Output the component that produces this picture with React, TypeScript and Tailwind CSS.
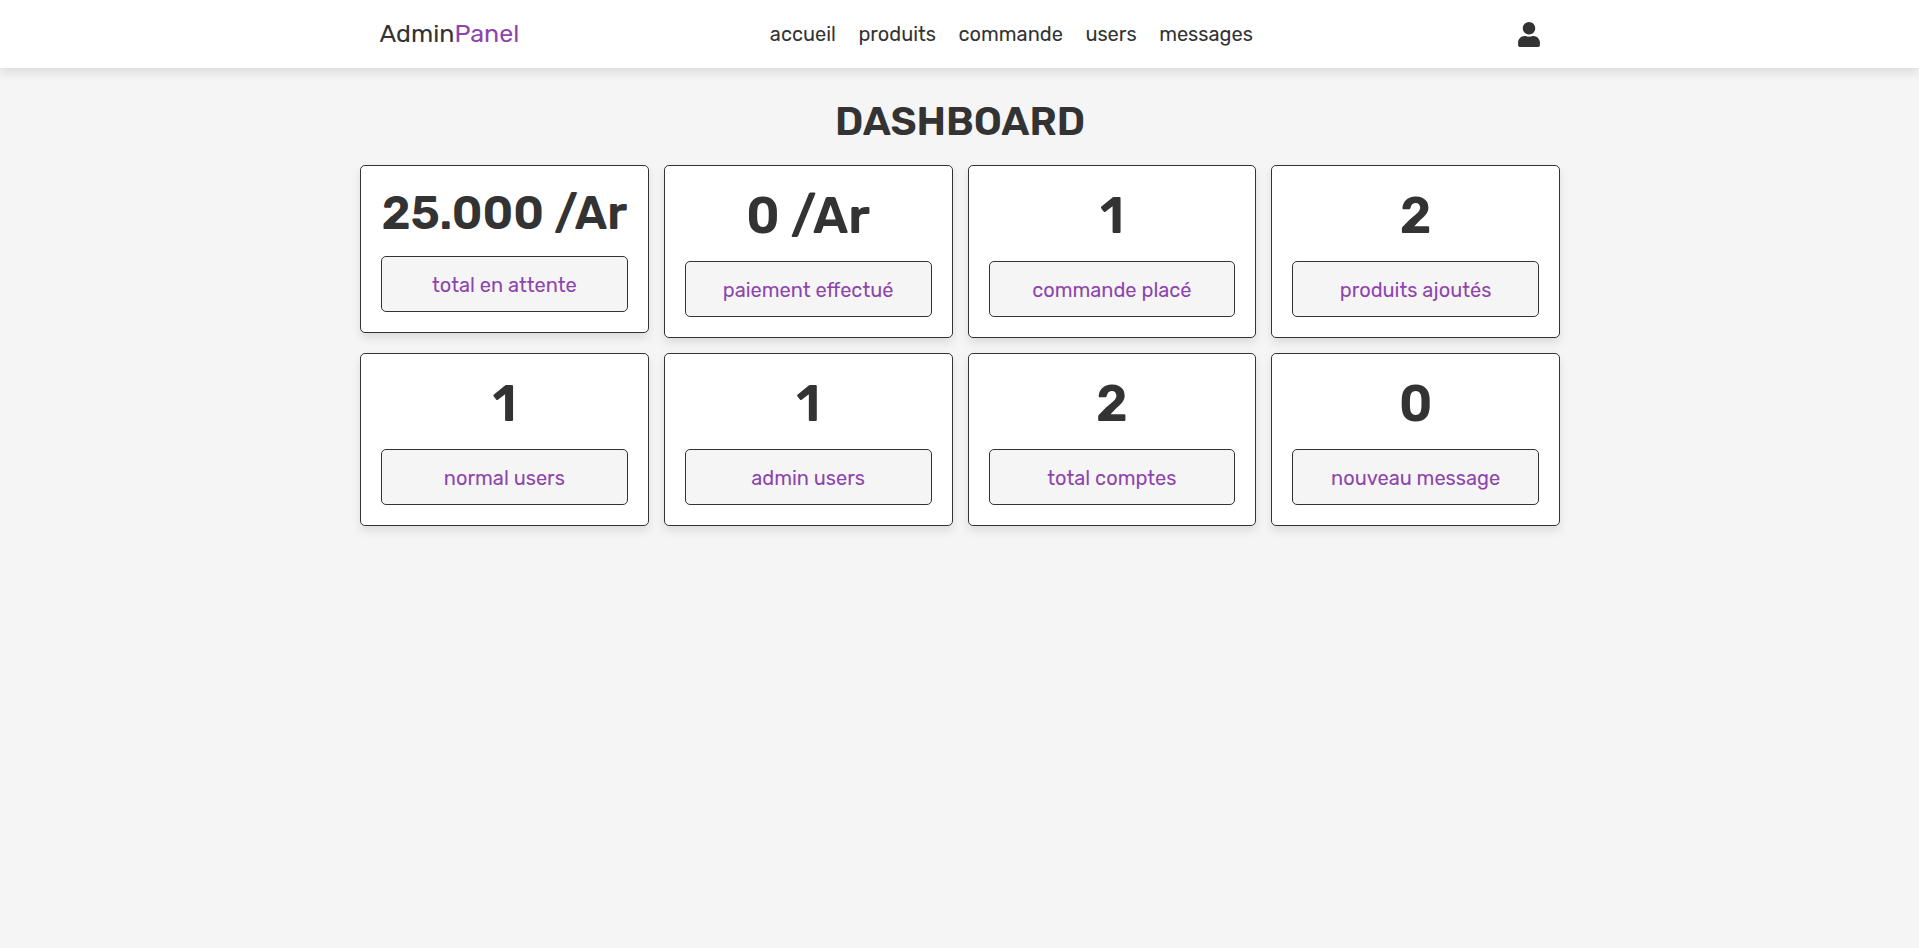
import { FaUser } from 'react-icons/fa';

const font = "font-['Rubik','Roboto','Liberation_Sans',sans-serif]";

const stats = [
  { value: '25.000 /Ar', label: 'total en attente', small: true },
  { value: '0 /Ar', label: 'paiement effectué' },
  { value: '1', label: 'commande placé' },
  { value: '2', label: 'produits ajoutés' },
  { value: '1', label: 'normal users' },
  { value: '1', label: 'admin users' },
  { value: '2', label: 'total comptes' },
  { value: '0', label: 'nouveau message' },
];

const links = ['accueil', 'produits', 'commande', 'users', 'messages'];

function StatCard({ value, label, small }: { value: string; label: string; small?: boolean }) {
  return (
    <div className="flex flex-col rounded-[5px] border border-[#333] bg-white px-[20px] pt-[17px] pb-[20px] text-center shadow-[0_5px_10px_rgba(0,0,0,0.1)]">
      <h3 className={small ? 'h-[61px] text-[46px] leading-[61px] font-semibold whitespace-nowrap text-[#333]' : 'h-[66px] text-[50px] leading-[66px] font-semibold text-[#333]'}>
        {value}
      </h3>
      <p className="mt-[12px] flex h-[56px] items-center justify-center rounded-[5px] border border-[#333] bg-[#f5f5f5] pt-[1px] text-[20px] font-normal text-[#8e44ad]">
        {label}
      </p>
    </div>
  );
}

export default function App() {
  return (
    <div className={`${font} min-h-[948px] bg-[#f5f5f5]`}>
      <header className="flex h-[68px] items-center bg-white shadow-[0_5px_10px_rgba(0,0,0,0.1)]">
        <div className="mx-auto flex w-[1200px] items-center justify-between px-[20px]">
          <a className="text-[25px] font-normal text-[#333]">
            Admin<span className="text-[#8e44ad]">Panel</span>
          </a>
          <nav className="ml-[-14px] flex gap-[22.5px] text-[20px] font-normal text-[#333]">
            {links.map((l) => (
              <a key={l}>{l}</a>
            ))}
          </nav>
          <FaUser className="h-[25px] w-[22px] text-[#333]" />
        </div>
      </header>
      <main className="mx-auto w-[1201px] pl-[1px]">
        <h1 className="mt-[31px] mb-[20px] text-center text-[40px] leading-[46px] font-semibold text-[#333]">DASHBOARD</h1>
        <div className="grid grid-cols-4 items-start gap-[15px]">
          {stats.map((s) => (
            <StatCard key={s.label} {...s} />
          ))}
        </div>
      </main>
    </div>
  );
}
